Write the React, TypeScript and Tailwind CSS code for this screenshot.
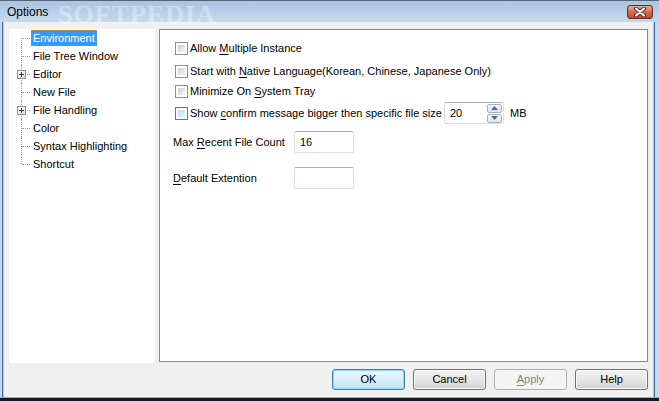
import type { ReactNode } from "react";

type TreeItem = {
  label: string;
  expandable?: boolean;
  selected?: boolean;
};

const treeItems: TreeItem[] = [
  { label: "Environment", selected: true },
  { label: "File Tree Window" },
  { label: "Editor", expandable: true },
  { label: "New File" },
  { label: "File Handling", expandable: true },
  { label: "Color" },
  { label: "Syntax Highlighting" },
  { label: "Shortcut" },
];

function CheckBox({ hover }: { hover?: boolean }) {
  return (
    <span
      className={
        hover
          ? "flex size-[13px] shrink-0 border border-[#3c7fb1] bg-white p-[2px]"
          : "flex size-[13px] shrink-0 border border-[#8e8f8f] bg-white p-[2px]"
      }
    >
      <span
        className={
          hover
            ? "block size-full bg-linear-to-br from-[#b6dcf7] to-[#e6f5fd]"
            : "block size-full bg-linear-to-br from-[#cdcdcd] to-[#f6f6f6]"
        }
      />
    </span>
  );
}

function Mn({ children }: { children: ReactNode }) {
  return <span className="underline underline-offset-[2px]">{children}</span>;
}

function TextBox({ value }: { value?: string }) {
  return (
    <div className="flex h-[22px] w-[60px] items-center rounded-[2px] border border-[#dbdfe6] border-t-[#abadb3] bg-white pl-[5px]">
      {value}
    </div>
  );
}

function SpinArrow({ up }: { up?: boolean }) {
  return (
    <svg width="7" height="4" viewBox="0 0 7 4" aria-hidden>
      {up ? <path d="M0 4 L3.5 0 L7 4 Z" fill="#4d6a96" /> : <path d="M0 0 L3.5 4 L7 0 Z" fill="#4d6a96" />}
    </svg>
  );
}

function Button({ children, variant }: { children: ReactNode; variant?: "default" | "disabled" }) {
  if (variant === "disabled") {
    return (
      <div className="flex h-[21px] w-[73px] items-center justify-center rounded-[3px] border border-[#adb2b5] bg-[#f4f4f4] text-[#838383]">
        {children}
      </div>
    );
  }
  return (
    <div
      className={
        variant === "default"
          ? "flex h-[21px] w-[73px] items-center justify-center rounded-[3px] border border-[#3c7fb1] bg-linear-to-b from-[#eaf6fd] via-[#dbeefa] to-[#c4e2f5] shadow-[inset_0_0_0_1px_#8fd3f7]"
          : "flex h-[21px] w-[73px] items-center justify-center rounded-[3px] border border-[#707070] bg-linear-to-b from-[#f2f2f2] via-[#e6e6e6] to-[#d2d2d2] shadow-[inset_0_0_0_1px_#fbfbfb]"
      }
    >
      {children}
    </div>
  );
}

function TreeRow({ item, index, count }: { item: TreeItem; index: number; count: number }) {
  const first = index === 0;
  const last = index === count - 1;
  return (
    <div className="relative flex h-[18px] items-center pl-[22px]">
      {/* dotted tree connectors */}
      <span
        className={
          first
            ? "absolute left-[12px] top-[9px] h-[9px] border-l border-dotted border-[#a0a0a0]"
            : last
              ? "absolute left-[12px] top-0 h-[9px] border-l border-dotted border-[#a0a0a0]"
              : "absolute left-[12px] top-0 h-[18px] border-l border-dotted border-[#a0a0a0]"
        }
      />
      <span className="absolute left-[13px] top-[9px] w-[8px] border-t border-dotted border-[#a0a0a0]" />
      {item.expandable ? (
        <span className="absolute left-[8px] top-[5px] flex size-[9px] items-center justify-center border border-[#919191] bg-linear-to-br from-white to-[#dcdcdc]">
          <svg width="5" height="5" viewBox="0 0 5 5" aria-hidden>
            <path d="M0 2.5 H5 M2.5 0 V5" stroke="#1e3c8c" strokeWidth="1" />
          </svg>
        </span>
      ) : null}
      <span
        className={
          item.selected
            ? "flex h-[16px] items-center bg-[#3399ff] px-[2px] text-white outline-1 outline-dotted -outline-offset-1 outline-[#c8821e]"
            : "flex h-[16px] items-center px-[2px] text-black"
        }
      >
        {item.label}
      </span>
    </div>
  );
}

export default function App() {
  return (
    <div
      className="relative flex h-[401px] w-[659px] flex-col overflow-hidden bg-[#bcd3ea] text-[11px] text-black"
      style={{ fontFamily: '"Liberation Sans", Arial, sans-serif' }}
    >
      {/* title bar */}
      <div className="flex h-[22px] shrink-0 items-center justify-between border-t border-[#55657a] bg-linear-to-b from-[#a9c4e1] to-[#c6daee] pl-[7px] pr-[6px]">
        <span className="text-[12px] leading-none">Options</span>
        <div className="flex h-[14px] w-[26px] items-center justify-center rounded-[3px] border border-[#6b2b22] bg-linear-to-b from-[#e8a793] via-[#d26e58] to-[#c04a32]">
          <svg width="14" height="10" viewBox="0 0 14 10" aria-hidden>
            <path d="M3 1.5 L11 8.5 M11 1.5 L3 8.5" stroke="#5a2a22" strokeWidth="4" strokeLinecap="round" />
            <path d="M3 1.5 L11 8.5 M11 1.5 L3 8.5" stroke="#ffffff" strokeWidth="2" strokeLinecap="round" />
          </svg>
        </div>
      </div>
      <span
        className="pointer-events-none absolute left-[58px] top-[-5px] text-[26px] font-bold tracking-[1px] text-white/35"
        style={{ fontFamily: '"Liberation Serif", serif' }}
      >
        SOFTPEDIA
      </span>

      <div className="flex min-h-0 flex-1">
        {/* left frame */}
        <div className="flex w-[4px] shrink-0">
          <div className="w-[2px] bg-[#c4d8ee]" />
          <div className="w-px bg-[#3e6fa8]" />
          <div className="w-px bg-[#a9cbeb]" />
        </div>

        {/* client */}
        <div className="flex min-w-0 flex-1 flex-col bg-[#f0f0f0] px-[5px] pb-[7px] pt-[7px]">
          <div className="flex min-h-0 flex-1 gap-[4px]">
            <div className="h-[334px] w-[146px] shrink-0 bg-white">
              {treeItems.map((item, i) => (
                <TreeRow key={item.label} item={item} index={i} count={treeItems.length} />
              ))}
            </div>

            <div className="flex h-[333px] flex-1 flex-col border border-[#828790] bg-white pl-[13px]">
              <div className="ml-[2px] mt-[8px] flex h-[20px] items-center gap-[2px]">
                <CheckBox />
                <span>
                  Allow <Mn>M</Mn>ultiple Instance
                </span>
              </div>
              <div className="ml-[2px] mt-[3px] flex h-[20px] items-center gap-[2px]">
                <CheckBox />
                <span>
                  Start with <Mn>N</Mn>ative Language(Korean, Chinese, Japanese Only)
                </span>
              </div>
              <div className="ml-[2px] flex h-[20px] items-center gap-[2px]">
                <CheckBox />
                <span>
                  Minimize On <Mn>S</Mn>ystem Tray
                </span>
              </div>
              <div className="ml-[2px] mt-px flex h-[22px] items-center gap-[2px]">
                <CheckBox hover />
                <span className="w-[252px]">
                  Show <Mn>c</Mn>onfirm message bigger then specific file size
                </span>
                <div className="flex h-[22px] w-[60px] items-center justify-between rounded-[2px] border border-[#dbdfe6] border-t-[#abadb3] bg-white pl-[5px] pr-px">
                  <span>20</span>
                  <div className="flex flex-col gap-px">
                    <div className="flex h-[9px] w-[15px] items-center justify-center rounded-[2px] border border-[#a9b0bb] bg-linear-to-b from-[#f7f7f7] to-[#dde3ea]">
                      <SpinArrow up />
                    </div>
                    <div className="flex h-[9px] w-[15px] items-center justify-center rounded-[2px] border border-[#a9b0bb] bg-linear-to-b from-[#f7f7f7] to-[#dde3ea]">
                      <SpinArrow />
                    </div>
                  </div>
                </div>
                <span className="ml-[4px]">MB</span>
              </div>
              <div className="mt-[7px] flex h-[22px] items-center">
                <span className="w-[121px]">
                  Max <Mn>R</Mn>ecent File Count
                </span>
                <TextBox value="16" />
              </div>
              <div className="mt-[14px] flex h-[22px] items-center">
                <span className="w-[121px]">
                  <Mn>D</Mn>efault Extention
                </span>
                <TextBox />
              </div>
            </div>
          </div>

          <div className="mt-[7px] flex justify-end gap-[8px]">
            <Button variant="default">OK</Button>
            <Button>Cancel</Button>
            <Button variant="disabled">
              <Mn>A</Mn>pply
            </Button>
            <Button>Help</Button>
          </div>
        </div>

        {/* right frame */}
        <div className="flex w-[6px] shrink-0">
          <div className="w-px bg-[#a9cbeb]" />
          <div className="w-px bg-[#3e6fa8]" />
          <div className="w-[4px] bg-[#c4d8ee]" />
        </div>
      </div>

      {/* bottom frame */}
      <div className="h-px shrink-0 bg-[#6ab6e4]" />
      <div className="h-[3px] shrink-0 bg-[#121a26]" />
    </div>
  );
}
